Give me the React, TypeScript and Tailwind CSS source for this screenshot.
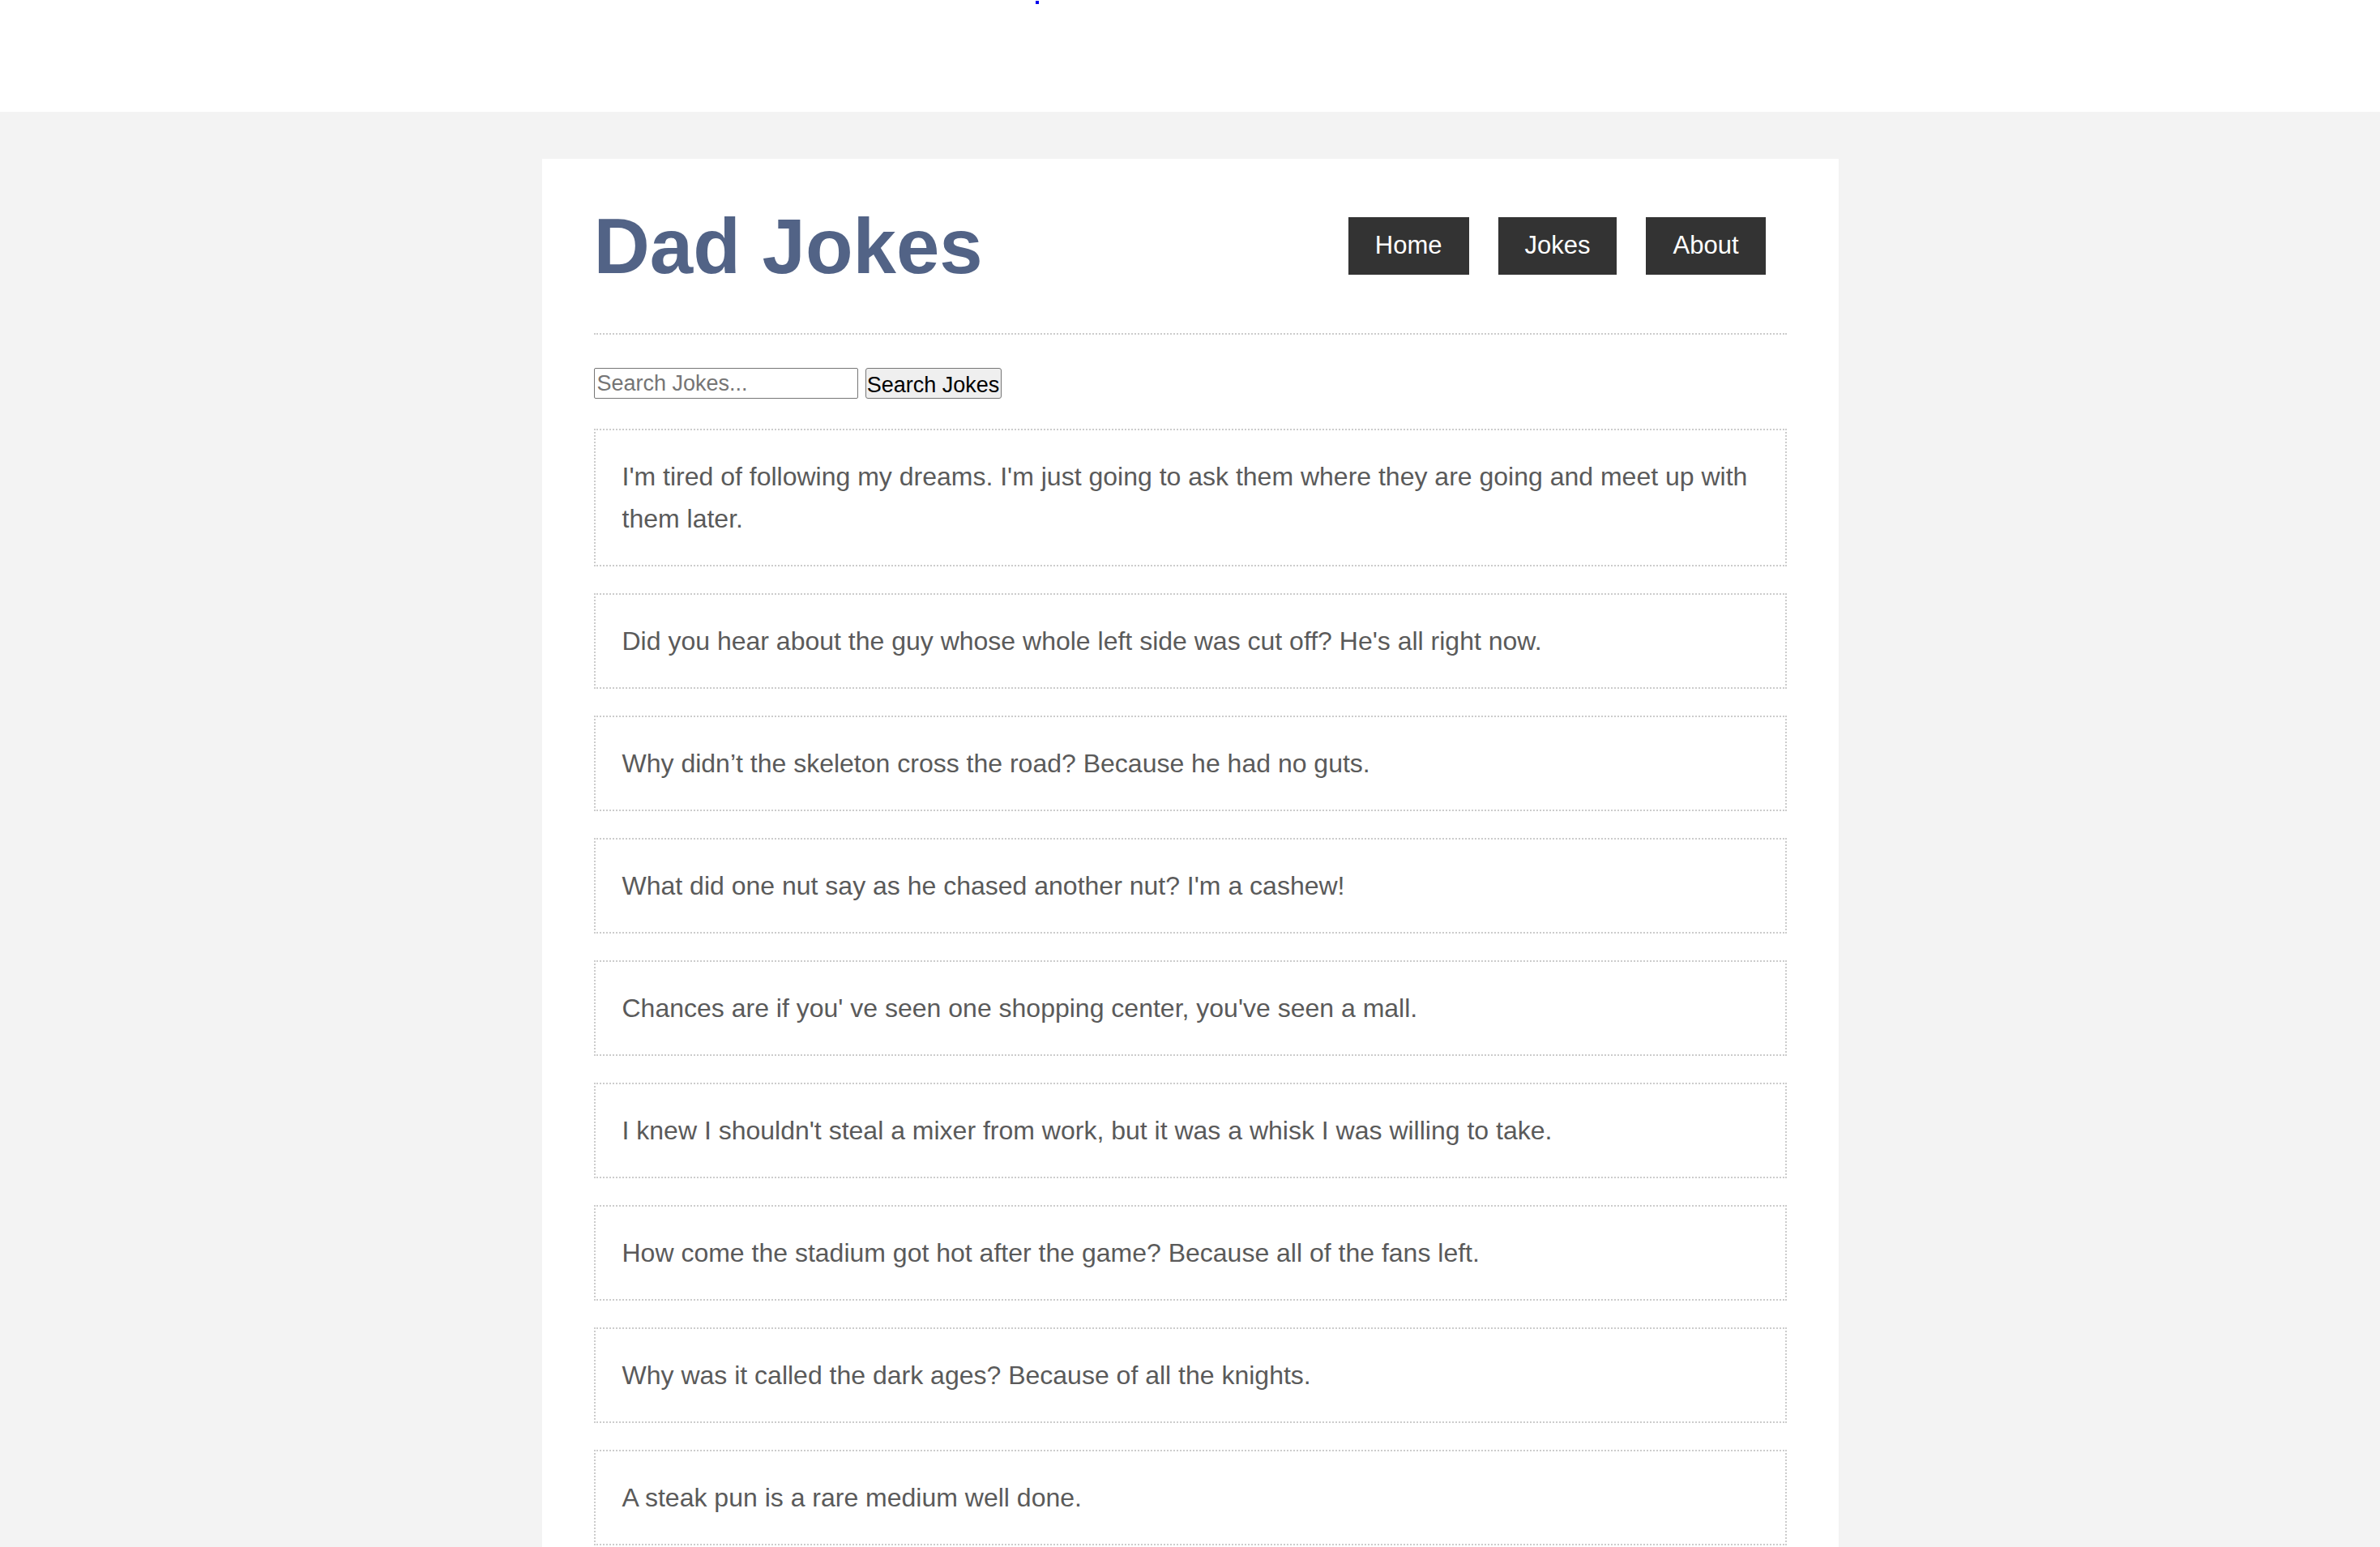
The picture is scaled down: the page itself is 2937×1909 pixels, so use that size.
import React from 'react'

const jokes = [
    "I'm tired of following my dreams. I'm just going to ask them where they are going and meet up with them later.",
    "Did you hear about the guy whose whole left side was cut off? He's all right now.",
    "Why didn’t the skeleton cross the road? Because he had no guts.",
    "What did one nut say as he chased another nut? I'm a cashew!",
    "Chances are if you' ve seen one shopping center, you've seen a mall.",
    "I knew I shouldn't steal a mixer from work, but it was a whisk I was willing to take.",
    "How come the stadium got hot after the game? Because all of the fans left.",
    "Why was it called the dark ages? Because of all the knights.",
    "A steak pun is a rare medium well done.",
]

function NavLink({ label }: { label: string }) {
    return (
        <a href="#" className="flex h-[71px] items-center bg-[#333333] px-[33px] text-[31px] text-white">
            {label}
        </a>
    )
}

function App() {
    return (
        <div className="min-h-screen bg-[#f3f3f3] font-['Liberation_Sans',Arial,sans-serif]">
            <div className="h-[137px] bg-white">
                <span className="ml-[1278px] mt-[1px] block h-[4px] w-[4px] bg-[#0000ee]"></span>
            </div>
            <div className="pt-[58px]">
                <div className="mx-auto w-[1600px] bg-white px-16 pb-16">
                    <header className="flex items-center justify-between border-b-2 border-dotted border-[#cccccc] py-[54px]">
                        <h1 className="text-[96px] font-bold leading-[107px] text-[#526386]">Dad Jokes</h1>
                        <nav className="mr-[26px] flex gap-9">
                            <NavLink label="Home" />
                            <NavLink label="Jokes" />
                            <NavLink label="About" />
                        </nav>
                    </header>

                    <form className="mt-[41px] flex items-center gap-[9px]" onSubmit={(e) => e.preventDefault()}>
                        <input
                            type="text"
                            placeholder="Search Jokes..."
                            className="h-[38px] w-[326px] rounded-[2px] border border-[#767676] px-[3px] text-[27px] text-black placeholder:text-[#757575]"
                        />
                        <button className="h-[38px] w-[168px] rounded-[3px] border border-[#767676] bg-[#efefef] text-[27px] text-black">
                            Search Jokes
                        </button>
                    </form>

                    <div className="mt-[37px] flex flex-col gap-[33px]">
                        {jokes.map((joke) => (
                            <div key={joke} className="border-2 border-dotted border-[#cccccc] px-[33px] py-[31px] text-[32px] leading-[52px] text-[#5a5a5a]">
                                {joke}
                            </div>
                        ))}
                    </div>
                </div>
            </div>
        </div>
    )
}

export default App
